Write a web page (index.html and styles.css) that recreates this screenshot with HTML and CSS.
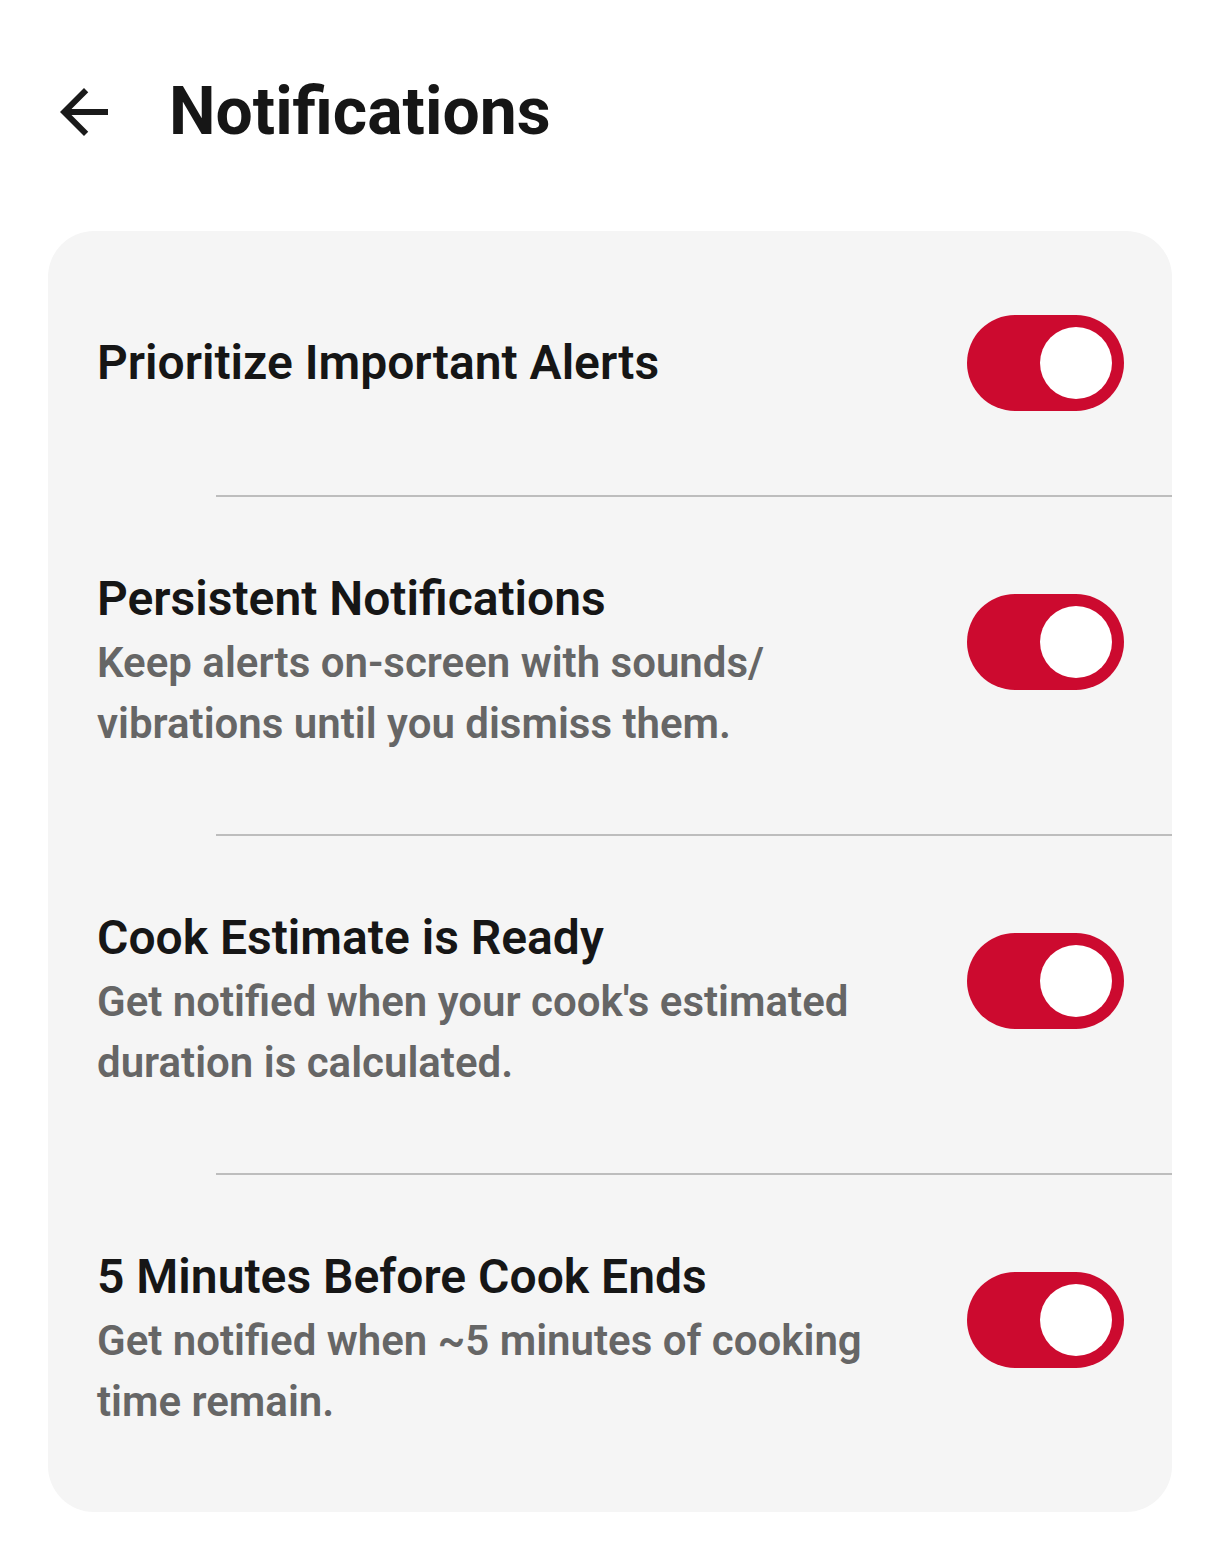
FILE: index.html
```html
<!DOCTYPE html>
<html lang="en">
<head>
<meta charset="utf-8">
<title>Notifications</title>
<link rel="stylesheet" href="styles.css">
</head>
<body>
<header class="topbar">
  <button class="back" aria-label="Back">
    <svg viewBox="0 0 24 24" width="72" height="72"><path d="M20 11H7.83l5.59-5.59L12 4l-8 8 8 8 1.41-1.41L7.83 13H20v-2z" fill="#1a1a1a"/></svg>
  </button>
  <h1 class="title">Notifications</h1>
</header>
<main class="card">
  <div class="row row-single">
    <div class="text"><div class="label">Prioritize Important Alerts</div></div>
    <span class="switch"><span class="thumb"></span></span>
  </div>
  <div class="divider"></div>
  <div class="row">
    <div class="text">
      <div class="label">Persistent Notifications</div>
      <div class="desc">Keep alerts on-screen with sounds/<wbr>vibrations until you dismiss them.</div>
    </div>
    <span class="switch"><span class="thumb"></span></span>
  </div>
  <div class="divider"></div>
  <div class="row">
    <div class="text">
      <div class="label">Cook Estimate is Ready</div>
      <div class="desc">Get notified when your cook's estimated duration is calculated.</div>
    </div>
    <span class="switch"><span class="thumb"></span></span>
  </div>
  <div class="divider"></div>
  <div class="row">
    <div class="text">
      <div class="label">5 Minutes Before Cook Ends</div>
      <div class="desc">Get notified when ~5 minutes of cooking time remain.</div>
    </div>
    <span class="switch"><span class="thumb"></span></span>
  </div>
</main>
</body>
</html>
```

FILE: styles.css
```css
* { box-sizing: border-box; }
html, body {
  margin: 0;
  padding: 0;
  background: #ffffff;
  font-family: Roboto, "Noto Sans", "Liberation Sans", sans-serif;
  color: #161616;
}
.topbar {
  display: flex;
  align-items: center;
  padding: 72px 48px 0 48px;
  height: 152px;
}
.back {
  width: 72px;
  height: 72px;
  padding: 0;
  border: 0;
  background: none;
  display: flex;
}
.title {
  margin: 0 0 0 49px;
  font-size: 66px;
  line-height: 80px;
  font-weight: 700;
  color: #161616;
}
.card {
  margin: 79px 48px 0 48px;
  background: #f5f5f5;
  border-radius: 46px;
  overflow: hidden;
}
.row {
  display: flex;
  align-items: flex-start;
  padding: 72px 48px 80px 49px;
}
.row-single {
  align-items: center;
  height: 264px;
  padding-top: 0;
  padding-bottom: 0;
}
.text {
  flex: 1;
  margin-right: 40px;
}
.label {
  font-size: 48px;
  line-height: 60px;
  font-weight: 650;
  color: #161616;
}
.desc {
  margin-top: 3px;
  font-size: 42px;
  line-height: 61px;
  font-weight: 560;
  color: #666666;
}
.row .switch { margin-top: 25px; }
.row-single .switch { margin-top: 0; }
.switch {
  flex: none;
  width: 157px;
  height: 96px;
  border-radius: 48px;
  background: #cc0a2f;
  display: flex;
  align-items: center;
  justify-content: flex-end;
  padding-right: 12px;
}
.thumb {
  width: 72px;
  height: 72px;
  border-radius: 50%;
  background: #ffffff;
}
.divider {
  height: 2px;
  margin-left: 168px;
  background: #bdbdbd;
}
```
